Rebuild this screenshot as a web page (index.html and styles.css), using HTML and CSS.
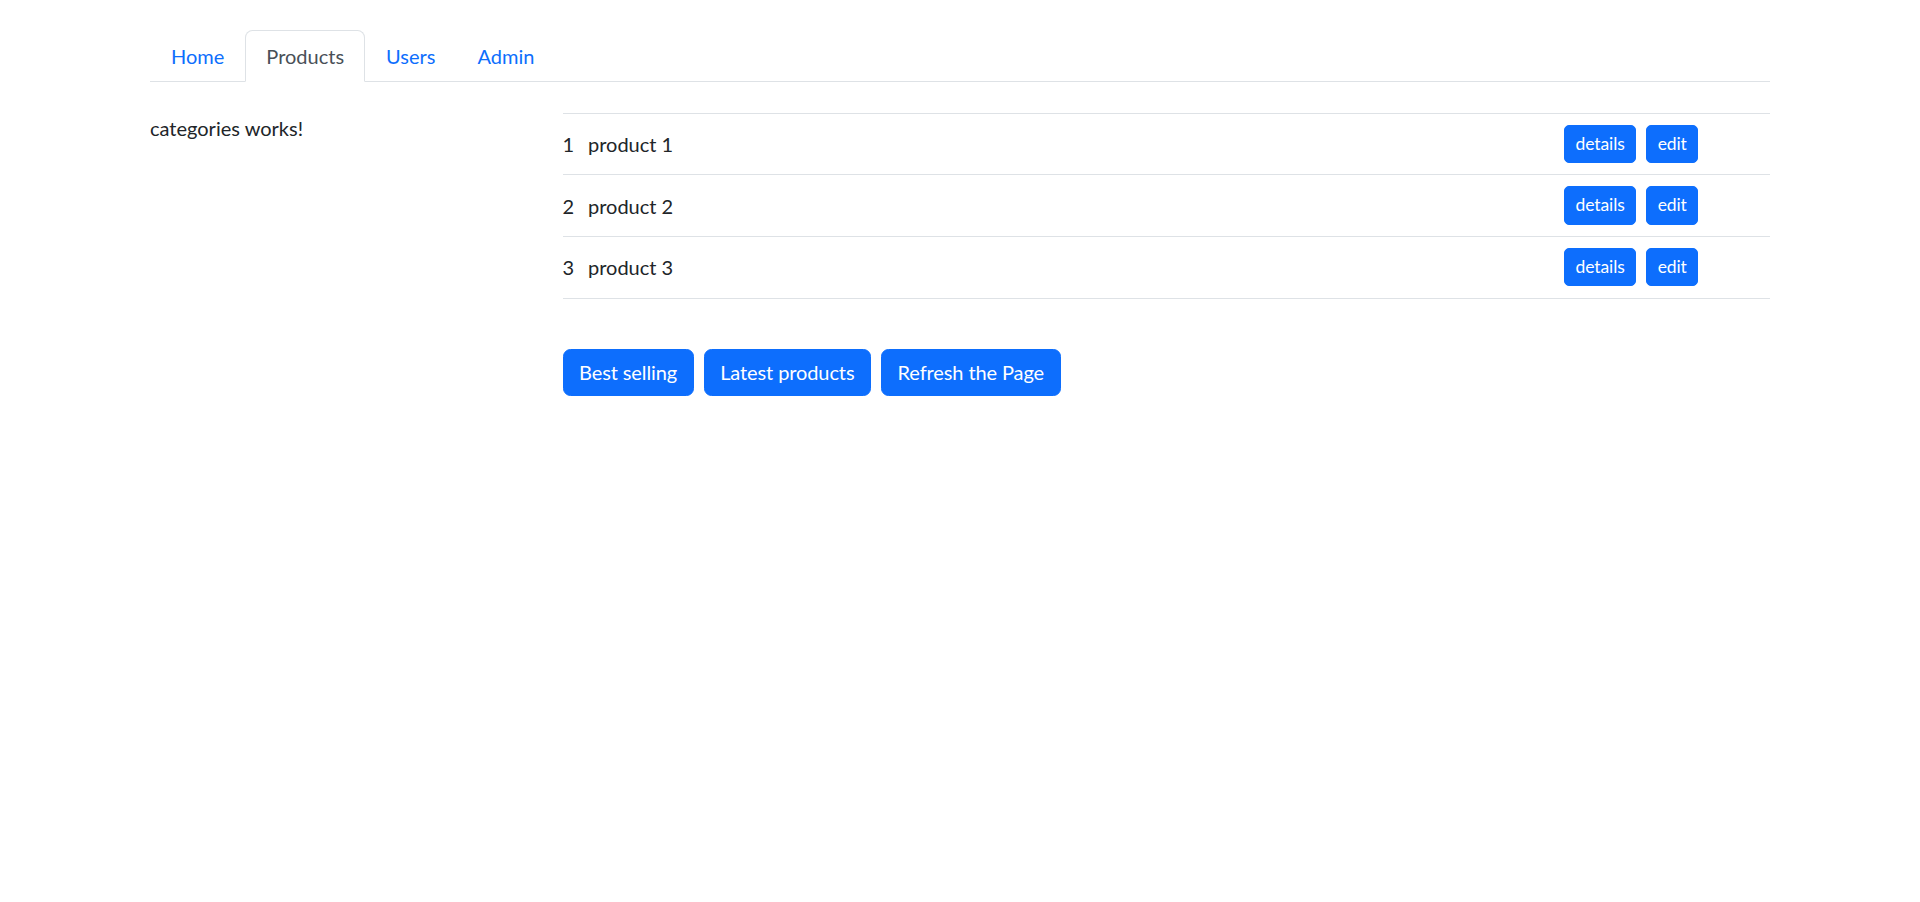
FILE: index.html
```html
<!DOCTYPE html>
<html lang="en">
<head>
<meta charset="utf-8">
<title>Products</title>
<link rel="stylesheet" href="styles.css">
</head>
<body>
<div class="container">
  <ul class="tabs">
    <li><a class="tab" href="#">Home</a></li>
    <li><a class="tab active" href="#">Products</a></li>
    <li><a class="tab" href="#">Users</a></li>
    <li><a class="tab" href="#">Admin</a></li>
  </ul>
  <div class="content">
    <div class="side">
      <p class="side-text">categories works!</p>
    </div>
    <div class="main">
      <div class="table">
        <div class="row">
          <span class="num">1</span>
          <span class="name">product 1</span>
          <span class="actions"><button class="btn btn-sm">details</button><button class="btn btn-sm">edit</button></span>
        </div>
        <div class="row">
          <span class="num">2</span>
          <span class="name">product 2</span>
          <span class="actions"><button class="btn btn-sm">details</button><button class="btn btn-sm">edit</button></span>
        </div>
        <div class="row">
          <span class="num">3</span>
          <span class="name">product 3</span>
          <span class="actions"><button class="btn btn-sm">details</button><button class="btn btn-sm">edit</button></span>
        </div>
      </div>
      <div class="toolbar">
        <button class="btn">Best selling</button>
        <button class="btn">Latest products</button>
        <button class="btn">Refresh the Page</button>
      </div>
    </div>
  </div>
</div>
</body>
</html>
```

FILE: styles.css
```css
* { box-sizing: border-box; }
html, body { margin: 0; padding: 0; background: #fff; }
body {
  font-family: Lato, "Liberation Sans", sans-serif;
  font-size: 20px;
  line-height: 30px;
  color: #212529;
}
.container {
  width: 1620px;
  margin: 30px auto 0;
}
.tabs {
  list-style: none;
  margin: 0;
  padding: 0;
  display: flex;
  border-bottom: 1px solid #dee2e6;
}
.tabs li { margin-bottom: -1px; }
.tab {
  display: block;
  padding: 10px 20px;
  border: 1px solid transparent;
  border-top-left-radius: 7.5px;
  border-top-right-radius: 7.5px;
  color: #0d6efd;
  text-decoration: none;
}
.tab.active {
  color: #495057;
  background: #fff;
  border-color: #dee2e6 #dee2e6 #fff;
}
.content {
  display: flex;
  margin-top: 30.5px;
}
.side {
  width: 412.5px;
  flex: none;
}
.side-text { margin: 0; }
.main { flex: 1; }
.table { border-top: 1px solid #dee2e6; }
.row {
  display: flex;
  align-items: center;
  height: 61.7px;
  border-bottom: 1px solid #dee2e6;
}
.num { width: 25.5px; flex: none; }
.name { flex: 1; }
.actions {
  width: 206px;
  flex: none;
  display: flex;
  gap: 10px;
}
.btn {
  font-family: inherit;
  font-size: 20px;
  line-height: 30px;
  letter-spacing: -0.1px;
  padding: 7.5px 15.5px;
  border: 1px solid #0d6efd;
  background: #0d6efd;
  color: #fff;
  border-radius: 7.5px;
  cursor: pointer;
}
.btn-sm {
  font-size: 17.5px;
  line-height: 26.25px;
  padding: 5px 10.5px;
  border-radius: 5px;
}
.toolbar {
  display: flex;
  gap: 10px;
  margin-top: 50px;
}
```
